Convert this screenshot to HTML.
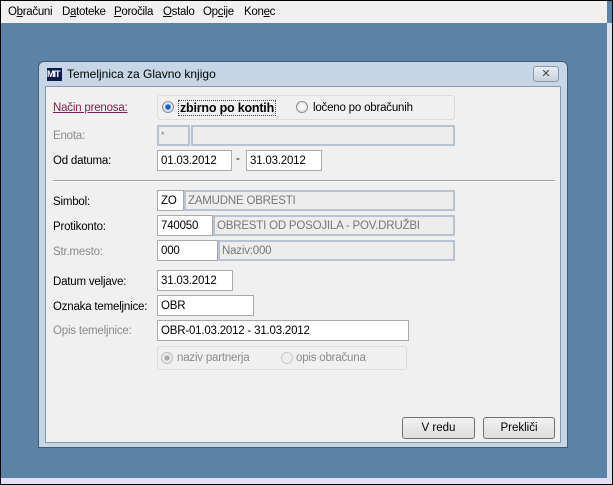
<!DOCTYPE html><html><head><meta charset="utf-8"><style>
*{box-sizing:border-box;margin:0;padding:0}
body{width:613px;height:485px;overflow:hidden;background:#000;font-family:"Liberation Sans",sans-serif;font-size:11px;position:relative}
.a{position:absolute}
#bg{left:1px;top:1px;width:611px;height:483px;background:#5b83a7}
#menu{left:1px;top:1px;width:606px;height:22px;background:#f0f0f0;color:#000;font-size:11.5px;letter-spacing:-0.3px}
#menu span{position:absolute;top:5px}
.lbl{position:absolute;color:#000;font-size:11.5px;letter-spacing:-0.2px}
.dis{color:#8a8a8a}
.f{position:absolute;height:21px;border:1px solid #a9a9a9;background:#fff;padding:4px 0 0 3px;font-size:11.5px;color:#000;white-space:nowrap;letter-spacing:-0.2px}
.g{background:#ededed;border:2px solid #b7c3d3;color:#777;padding:3px 0 0 2px}
.btn{position:absolute;height:22px;border:1px solid #707070;border-radius:3px;background:linear-gradient(#f2f2f2,#dcdcdc);text-align:center;line-height:20px;font-size:11.5px}
.r{position:absolute;width:12px;height:12px;border-radius:50%;border:1px solid #8e8f8f;background:radial-gradient(#fff,#dcdcdc)}
</style></head><body>
<div class="a" id="bg"></div>
<div class="a" style="left:607px;top:23px;width:5px;height:456px;background:#d8e2ee"></div>
<div class="a" style="left:1px;top:478px;width:611px;height:6px;background:#e6ddf6"></div>
<div class="a" id="menu">
<span style="left:7px">O<u>b</u>računi</span>
<span style="left:61px">D<u>a</u>toteke</span>
<span style="left:113px"><u>P</u>oročila</span>
<span style="left:162px"><u>O</u>stalo</span>
<span style="left:202px">Op<u>c</u>ije</span>
<span style="left:243px">Kon<u>e</u>c</span>
</div>
<div class="a" style="left:38px;top:61px;width:530px;height:387px;background:#c6d6e6;border:1px solid #4a5a6a;border-radius:6px 6px 0 0"></div>
<div class="a" style="left:47px;top:68px;width:15px;height:13px;background:#0d1b4c;color:#fff;font-size:9px;font-weight:bold;line-height:13px;letter-spacing:-1px">MIT</div>
<div class="a" style="left:67px;top:67px;font-size:12px;color:#000">Temeljnica za Glavno knjigo</div>
<div class="a" style="left:533px;top:66px;width:26px;height:16px;border:1px solid #8a97a6;border-radius:3px;background:linear-gradient(#e8eef4,#c8d2dc);text-align:center;font-size:11px;line-height:14px;color:#444">✕</div>
<div class="a" style="left:45px;top:86px;width:516px;height:357px;background:#f0f0f0;border:1px solid #8a9aaa"></div>

<div class="lbl" style="left:53px;top:102px;color:#7a1f4e;text-decoration:underline">Način prenosa:</div>
<div class="a" style="left:157px;top:95px;width:298px;height:25px;border:1px solid #dcdcdc;border-radius:3px"></div>
<div class="r" style="left:162px;top:101px;background:radial-gradient(#1c5ec8 30%,#cfe0f3 45%,#fff)"></div>
<div class="lbl" style="left:178px;top:100px;font-weight:bold;font-size:12.5px;border:1px dotted #444;padding:0 1px">zbirno po kontih</div>
<div class="r" style="left:296px;top:101px"></div>
<div class="lbl" style="left:313px;top:102px">ločeno po obračunih</div>

<div class="lbl dis" style="left:53px;top:130px">Enota:</div>
<div class="f g" style="left:157px;top:125px;width:33px;font-size:9px">*</div>
<div class="f g" style="left:191px;top:125px;width:264px"></div>
<div class="lbl" style="left:53px;top:155px">Od datuma:</div>
<div class="f" style="left:157px;top:150px;width:75px">01.03.2012</div>
<div class="lbl" style="left:236px;top:153px">-</div>
<div class="f" style="left:246px;top:150px;width:76px">31.03.2012</div>
<div class="a" style="left:53px;top:180px;width:502px;height:2px;border-top:1px solid #a0a0a0;border-bottom:1px solid #fff"></div>

<div class="lbl" style="left:53px;top:196px">Simbol:</div>
<div class="f" style="left:157px;top:190px;width:27px">ZO</div>
<div class="f g" style="left:184px;top:190px;width:271px">ZAMUDNE OBRESTI</div>
<div class="lbl" style="left:53px;top:221px">Protikonto:</div>
<div class="f" style="left:157px;top:215px;width:56px">740050</div>
<div class="f g" style="left:213px;top:215px;width:242px">OBRESTI OD POSOJILA - POV.DRUŽBI</div>
<div class="lbl dis" style="left:53px;top:246px">Str.mesto:</div>
<div class="f" style="left:157px;top:240px;width:61px">000</div>
<div class="f g" style="left:218px;top:240px;width:237px">Naziv:000</div>

<div class="lbl" style="left:53px;top:276px">Datum veljave:</div>
<div class="f" style="left:157px;top:270px;width:76px">31.03.2012</div>
<div class="lbl" style="left:53px;top:301px">Oznaka temeljnice:</div>
<div class="f" style="left:157px;top:295px;width:97px">OBR</div>
<div class="lbl dis" style="left:53px;top:325px">Opis temeljnice:</div>
<div class="f" style="left:157px;top:320px;width:252px">OBR-01.03.2012 - 31.03.2012</div>
<div class="a" style="left:157px;top:346px;width:250px;height:24px;border:1px solid #dcdcdc;border-radius:3px"></div>
<div class="r" style="left:161px;top:352px;border-color:#bbb;background:radial-gradient(#aaa 30%,#eee 45%)"></div>
<div class="lbl dis" style="left:177px;top:352px">naziv partnerja</div>
<div class="r" style="left:281px;top:352px;border-color:#ccc;background:#eee"></div>
<div class="lbl dis" style="left:296px;top:352px">opis obračuna</div>

<div class="btn" style="left:402px;top:417px;width:73px">V redu</div>
<div class="btn" style="left:483px;top:417px;width:72px">Prekliči</div>
</body></html>
